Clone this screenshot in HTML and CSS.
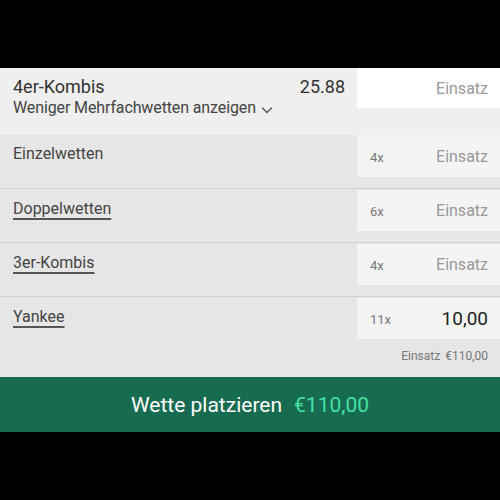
FILE: index.html
```html
<!DOCTYPE html>
<html lang="de">
<head>
    <meta charset="UTF-8">
    <title>Wettschein</title>
    <link rel="stylesheet" href="styles.css">
</head>
<body>
<div class="slip">
    <div class="head">
        <div class="head-info">
            <div class="head-title">
                <span>4er-Kombis</span>
                <span class="odds">25.88</span>
            </div>
            <div class="toggle">Weniger Mehrfachwetten anzeigen
                <svg class="chevron" width="12" height="8" viewBox="0 0 12 8"><path d="M1 1.5 L6 6.5 L11 1.5" fill="none" stroke="#555" stroke-width="1.3"/></svg>
            </div>
        </div>
        <div class="stake stake-white"><span></span><span class="placeholder">Einsatz</span></div>
    </div>

    <div class="row">
        <div class="label">Einzelwetten</div>
        <div class="stake"><span class="count">4x</span><span class="placeholder">Einsatz</span></div>
    </div>
    <div class="row">
        <div class="label link">Doppelwetten</div>
        <div class="stake"><span class="count">6x</span><span class="placeholder">Einsatz</span></div>
    </div>
    <div class="row">
        <div class="label link">3er-Kombis</div>
        <div class="stake"><span class="count">4x</span><span class="placeholder">Einsatz</span></div>
    </div>
    <div class="row row-last">
        <div class="label link">Yankee</div>
        <div class="stake-col">
            <div class="stake"><span class="count">11x</span><span class="value">10,00</span></div>
            <div class="subtotal">Einsatz <span class="sub-amount">€110,00</span></div>
        </div>
    </div>

    <div class="place">
        Wette platzieren <span class="place-amount">€110,00</span>
    </div>
</div>
</body>
</html>
```

FILE: styles.css
```css
* {
    margin: 0;
    padding: 0;
    box-sizing: border-box;
}

body {
    background: #000;
    font-family: Roboto, "Liberation Sans", sans-serif;
    width: 500px;
    height: 500px;
    overflow: hidden;
}

.slip {
    margin-top: 68px;
    background: #e6e6e6;
}

.head {
    display: flex;
    height: 67px;
    background: #efefef;
}

.head-info {
    width: 357px;
    padding: 8px 12px 0 13px;
}

.head-title {
    display: flex;
    justify-content: space-between;
    font-size: 18px;
    line-height: 22px;
    color: #333;
}

.toggle {
    font-size: 16px;
    line-height: 20px;
    color: #444;
    letter-spacing: -0.12px;
}

.chevron {
    margin-left: 1px;
    vertical-align: -1px;
}

.stake {
    width: 143px;
    height: 42px;
    background: #f4f4f4;
    display: flex;
    align-items: center;
    justify-content: space-between;
    padding: 0 12px 0 13px;
}

.stake-white {
    background: #fff;
    height: 40px;
}

.placeholder {
    font-size: 16px;
    color: #999;
}

.count {
    font-size: 13px;
    color: #777;
    padding-top: 2px;
}

.value {
    font-size: 19px;
    color: #222;
}

.row {
    display: flex;
    justify-content: space-between;
    padding-bottom: 11px;
}

.row + .row {
    border-top: 1px solid #d2d2d2;
    padding-top: 1px;
}

.row + .row .stake {
    height: 41px;
}

.row-last {
    padding-bottom: 13px;
}

.label {
    padding: 9px 0 0 13px;
    font-size: 16px;
    line-height: 20px;
    color: #444;
    height: 20px;
    box-sizing: content-box;
}

.link {
    text-decoration: underline;
    text-decoration-thickness: 1.5px;
    text-underline-offset: 4px;
    text-decoration-color: #555;
}

.subtotal {
    margin-top: 9px;
    padding-right: 12px;
    text-align: right;
    font-size: 12px;
    line-height: 16px;
    color: #777;
}

.sub-amount {
    margin-left: 2px;
}

.place {
    height: 55px;
    background: #176b51;
    color: #fff;
    font-size: 21px;
    display: flex;
    align-items: center;
    justify-content: center;
}

.place-amount {
    color: #45e0a6;
    margin-left: 12px;
}
```
